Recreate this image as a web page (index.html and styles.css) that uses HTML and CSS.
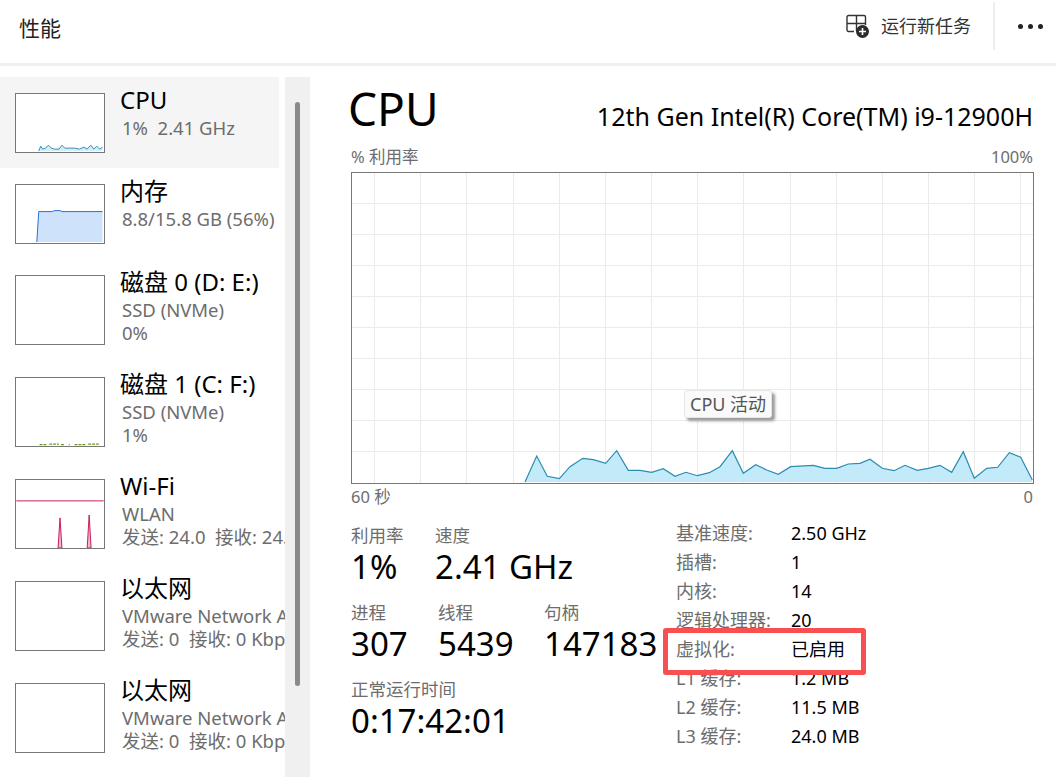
FILE: index.html
```html
<!DOCTYPE html>
<html lang="zh-CN">
<head>
  <meta charset="UTF-8">
  <title>性能</title>
  <link rel="stylesheet" href="styles.css">
</head>
<body>

  <!-- Header -->
  <header class="top-bar">
    <div class="top-title">性能</div>
    <div class="top-actions">
      <svg class="new-task-icon" width="24" height="25" viewBox="0 0 24 25">
        <path d="M8 17.5H2.5a1.5 1.5 0 0 1-1.500-1.500V3a1.500 1.500 0 0 1 1.500-1.500H18a1.500 1.500 0 0 1 1.500 1.500V11M1 9.500H19.500M10.500 1.500V17" fill="none" stroke="#333" stroke-width="1.400"/>
        <circle cx="16.500" cy="17.500" r="6.500" fill="#2b2b2b"/>
        <path d="M16.500 14V21M13 17.500H20" stroke="#fff" stroke-width="1.600"/>
      </svg>
      <span class="new-task-label">运行新任务</span>
      <div class="top-divider"></div>
      <div class="more-dots"><i></i><i></i><i></i></div>
    </div>
  </header>

  <main class="main-area">

    <!-- Side list -->
    <nav class="side-list">
      <div class="side-item short selected">
        <svg class="thumb" width="90" height="60" viewBox="0 0 90 60">
          <path d="M23 59 L25 54 L27 57 L30 56 L33 53 L36 56 L39 57 L44 57 L47 53 L50 56 L55 56 L60 56 L65 57 L70 55 L73 57 L77 53 L80 57 L83 54 L86 57 L89 55 V59 Z" fill="#d3eef9"/>
          <path d="M23 59 L25 54 L27 57 L30 56 L33 53 L36 56 L39 57 L44 57 L47 53 L50 56 L55 56 L60 56 L65 57 L70 55 L73 57 L77 53 L80 57 L83 54 L86 57 L89 55" fill="none" stroke="#2a8db0" stroke-width="1"/>
        </svg>
        <div class="side-text">
          <div class="side-name">CPU</div>
          <div class="side-sub">1%&nbsp; 2.41 GHz</div>
        </div>
      </div>
      <div class="side-item short">
        <svg class="thumb" width="90" height="60" viewBox="0 0 90 60">
          <path d="M21 59 L23 27.500 H37 L39 26.500 H45 L47 27.500 H89 V59 Z" fill="#cfe2fb"/>
          <path d="M21 59 L23 27.500 H37 L39 26.500 H45 L47 27.500 H89" fill="none" stroke="#1f6fd6" stroke-width="1"/>
        </svg>
        <div class="side-text">
          <div class="side-name">内存</div>
          <div class="side-sub">8.8/15.8 GB (56%)</div>
        </div>
      </div>
      <div class="side-item">
        <svg class="thumb" width="90" height="70" viewBox="0 0 90 70"></svg>
        <div class="side-text">
          <div class="side-name">磁盘 0 (D: E:)</div>
          <div class="side-sub">SSD (NVMe)</div>
          <div class="side-sub">0%</div>
        </div>
      </div>
      <div class="side-item">
        <svg class="thumb" width="90" height="70" viewBox="0 0 90 70">
          <path d="M24 68.500H32M34 68H44M46 68.500H50M54 68.500H55M60 68.500H72M74 68H86" fill="none" stroke="#6b9a1f" stroke-width="1.200" stroke-dasharray="3 1"/>
        </svg>
        <div class="side-text">
          <div class="side-name">磁盘 1 (C: F:)</div>
          <div class="side-sub">SSD (NVMe)</div>
          <div class="side-sub">1%</div>
        </div>
      </div>
      <div class="side-item">
        <svg class="thumb" width="90" height="70" viewBox="0 0 90 70">
          <path d="M43 70 L45 39 L47 70 Z M73 70 L75 36 L77 70 Z" fill="#efb8cf" stroke="#c8175a" stroke-width="1"/>
          <path d="M0 21.500H90" stroke="#c8175a" stroke-width="1"/>
        </svg>
        <div class="side-text">
          <div class="side-name">Wi-Fi</div>
          <div class="side-sub">WLAN</div>
          <div class="side-sub">发送: 24.0&nbsp; 接收: 24.</div>
        </div>
      </div>
      <div class="side-item">
        <svg class="thumb" width="90" height="70" viewBox="0 0 90 70"></svg>
        <div class="side-text">
          <div class="side-name">以太网</div>
          <div class="side-sub">VMware Network A</div>
          <div class="side-sub">发送: 0&nbsp; 接收: 0 Kbp</div>
        </div>
      </div>
      <div class="side-item">
        <svg class="thumb" width="90" height="70" viewBox="0 0 90 70"></svg>
        <div class="side-text">
          <div class="side-name">以太网</div>
          <div class="side-sub">VMware Network A</div>
          <div class="side-sub">发送: 0&nbsp; 接收: 0 Kbp</div>
        </div>
      </div>
    </nav>

    <!-- Scrollbar -->
    <div class="scroll-track"><div class="scroll-thumb"></div></div>

    <!-- Detail pane -->
    <section class="detail">
      <div class="detail-head">
        <h1>CPU</h1>
        <div class="model-name">12th Gen Intel(R) Core(TM) i9-12900H</div>
      </div>
      <div class="chart-label top">
        <span>% 利用率</span>
        <span>100%</span>
      </div>

      <div class="chart-box">
        <svg width="683" height="312" viewBox="351 172 683 312">
          <path class="grid-line" d="M374.500 172V483M420.500 172V483M466.500 172V483M513.500 172V483M559.500 172V483M605.500 172V483M651.500 172V483M697.500 172V483M743.500 172V483M790.500 172V483M836.500 172V483M882.500 172V483M928.500 172V483M974.500 172V483M1020.500 172V483"/>
          <path class="grid-line" d="M351 203.500H1033M351 234.500H1033M351 265.500H1033M351 296.500H1033M351 327.500H1033M351 358.500H1033M351 389.500H1033M351 420.500H1033M351 451.500H1033"/>
          <path class="cpu-area" d="M525 482 L536.700 456 L547.300 476.300 L559.300 478.700 L570 466.700 L582.700 458.300 L593.300 459.700 L605.700 463.300 L616.700 450.700 L628.300 470.300 L640 470.300 L651.700 472.300 L663.300 468.700 L675 476.300 L686 472.300 L697.300 475.700 L709.300 472.700 L720 466.700 L732.300 450.700 L743.300 473.300 L755.700 464.700 L766.700 470 L778.300 474.300 L790.700 466.700 L813.300 465.300 L825 468.300 L836.700 468.300 L848.300 464 L860 463.300 L870 459.300 L882.300 468.300 L894 470.700 L905 465.300 L917.300 470.300 L928.300 468.300 L940 465.300 L951.700 472.300 L963.300 451.700 L974.300 478.300 L986.700 468.300 L997.700 467.300 L1009.300 452.700 L1020.700 457.300 L1032.300 480 V482 Z"/>
          <path class="cpu-line" d="M525 482 L536.700 456 L547.300 476.300 L559.300 478.700 L570 466.700 L582.700 458.300 L593.300 459.700 L605.700 463.300 L616.700 450.700 L628.300 470.300 L640 470.300 L651.700 472.300 L663.300 468.700 L675 476.300 L686 472.300 L697.300 475.700 L709.300 472.700 L720 466.700 L732.300 450.700 L743.300 473.300 L755.700 464.700 L766.700 470 L778.300 474.300 L790.700 466.700 L813.300 465.300 L825 468.300 L836.700 468.300 L848.300 464 L860 463.300 L870 459.300 L882.300 468.300 L894 470.700 L905 465.300 L917.300 470.300 L928.300 468.300 L940 465.300 L951.700 472.300 L963.300 451.700 L974.300 478.300 L986.700 468.300 L997.700 467.300 L1009.300 452.700 L1020.700 457.300 L1032.300 480"/>
          <rect class="chart-frame" x="351.500" y="172.500" width="682" height="311"/>
        </svg>
        <div class="chart-tip">CPU 活动</div>
      </div>

      <div class="chart-label bottom">
        <span>60 秒</span>
        <span>0</span>
      </div>

      <div class="stats-area">
        <div class="stats-left">
          <div class="stat-row">
            <div class="stat w-util">
              <div class="stat-name">利用率</div>
              <div class="stat-value">1%</div>
            </div>
            <div class="stat">
              <div class="stat-name">速度</div>
              <div class="stat-value">2.41 GHz</div>
            </div>
          </div>
          <div class="stat-row">
            <div class="stat w-proc">
              <div class="stat-name">进程</div>
              <div class="stat-value">307</div>
            </div>
            <div class="stat w-thread">
              <div class="stat-name">线程</div>
              <div class="stat-value">5439</div>
            </div>
            <div class="stat">
              <div class="stat-name">句柄</div>
              <div class="stat-value">147183</div>
            </div>
          </div>
          <div class="stat-row">
            <div class="stat">
              <div class="stat-name">正常运行时间</div>
              <div class="stat-value">0:17:42:01</div>
            </div>
          </div>
        </div>

        <div class="specs">
          <div class="spec-row"><span class="spec-name">基准速度:</span><span>2.50 GHz</span></div>
          <div class="spec-row"><span class="spec-name">插槽:</span><span>1</span></div>
          <div class="spec-row"><span class="spec-name">内核:</span><span>14</span></div>
          <div class="spec-row"><span class="spec-name">逻辑处理器:</span><span>20</span></div>
          <div class="spec-row marked"><span class="spec-name">虚拟化:</span><span>已启用</span><div class="red-box"></div></div>
          <div class="spec-row"><span class="spec-name">L1 缓存:</span><span>1.2 MB</span></div>
          <div class="spec-row"><span class="spec-name">L2 缓存:</span><span>11.5 MB</span></div>
          <div class="spec-row"><span class="spec-name">L3 缓存:</span><span>24.0 MB</span></div>
        </div>
      </div>
    </section>
  </main>

</body>
</html>
```

FILE: styles.css
```css
* {
  box-sizing: border-box;
}

html, body {
  height: 100%;
}

body {
  margin: 0;
  overflow: hidden;
  display: flex;
  flex-direction: column;
  background-color: #fff;
  color: #000;
  font-family: "Noto Sans", "Noto Sans CJK SC", sans-serif;
}

.top-bar {
  height: 66px;
  flex: none;
  display: flex;
  justify-content: space-between;
  border-bottom: 3px solid #f0f0f0;
}

.top-title {
  padding: 13px 0 0 19px;
  font-size: 21px;
  line-height: 30px;
  color: #222;
}

.top-actions {
  display: flex;
  align-items: flex-start;
}

.new-task-icon {
  margin: 14px 11px 0 0;
}

.new-task-label {
  margin-top: 13px;
  font-size: 18px;
  line-height: 26px;
  color: #333;
}

.top-divider {
  width: 2px;
  height: 48px;
  margin: 2px 23px 0 22px;
  background-color: #eee;
}

.more-dots {
  display: flex;
  gap: 5px;
  margin: 24px 13px 0 0;
}

.more-dots i {
  display: block;
  width: 5px;
  height: 5px;
  border-radius: 50%;
  background-color: #222;
}

.main-area {
  flex: 1;
  display: flex;
  padding-top: 11px;
  min-height: 0;
}

.side-list {
  width: 285px;
  flex: none;
  overflow: hidden;
}

.side-item {
  width: 279px;
  height: 102px;
  display: flex;
  padding: 16px 0 0 15px;
}

.side-item.short {
  height: 91px;
}

.side-item.selected {
  background-color: #f5f5f5;
}

.thumb {
  flex: none;
  background-color: #fff;
  border: 1px solid #777;
}

.side-text {
  margin-left: 15px;
  margin-top: -9px;
  white-space: nowrap;
}

.side-name {
  font-size: 24px;
  line-height: 32px;
}

.side-sub {
  padding-left: 2px;
  font-size: 18.500px;
  line-height: 23px;
  color: #6d6d6d;
}

.scroll-track {
  width: 25px;
  flex: none;
  padding: 25px 0 0 10px;
  background-color: #f0f0f0;
}

.scroll-thumb {
  width: 5px;
  height: 584px;
  border-radius: 3px;
  background-color: #8a8a8a;
}

.detail {
  flex: 1;
  padding: 0 23px 0 41px;
  min-width: 0;
}

.detail-head {
  display: flex;
  justify-content: space-between;
  align-items: baseline;
  height: 68px;
}

h1 {
  margin: -2px 0 0 -3px;
  font-size: 46px;
  font-weight: normal;
  line-height: 66px;
}

.model-name {
  font-size: 25px;
}

.chart-label {
  display: flex;
  justify-content: space-between;
  font-size: 16.500px;
  line-height: 20px;
  color: #6d6d6d;
}

.chart-label.top {
  height: 27px;
  padding-top: 2px;
}

.chart-label.bottom {
  height: 35px;
  padding-top: 3px;
}

.chart-box {
  position: relative;
  height: 312px;
}

.chart-box svg {
  display: block;
}

.grid-line {
  fill: none;
  stroke: #ebebeb;
  stroke-width: 1;
}

.cpu-area {
  fill: #bfe9f9;
  fill-opacity: 0.95;
}

.cpu-line {
  fill: none;
  stroke: #2a8db0;
  stroke-width: 1.200;
}

.chart-frame {
  fill: none;
  stroke: #777;
  stroke-width: 1;
}

.chart-tip {
  position: absolute;
  left: 333px;
  top: 218px;
  height: 28px;
  padding: 0 5px;
  font-size: 18px;
  line-height: 26px;
  white-space: nowrap;
  color: #555;
  background-color: #fafafa;
  border: 1px solid #e6e6e6;
  border-radius: 3px;
  box-shadow: 3px 3px 3px #999;
}

.stats-area {
  display: flex;
}

.stats-left {
  width: 325px;
  flex: none;
  padding-top: 4px;
}

.stat-row {
  display: flex;
  height: 77px;
}

.w-util {
  width: 84px;
}

.w-proc {
  width: 87px;
}

.w-thread {
  width: 106px;
}

.stat-name {
  font-size: 17.500px;
  line-height: 24px;
  color: #6d6d6d;
}

.stat-value {
  font-size: 33px;
  line-height: 40px;
  white-space: nowrap;
}

.specs {
  flex: 1;
  font-size: 18px;
}

.spec-row {
  display: flex;
  height: 29px;
  line-height: 29px;
  white-space: nowrap;
}

.spec-name {
  width: 115px;
  color: #6d6d6d;
}

.spec-row.marked {
  position: relative;
}

.red-box {
  position: absolute;
  left: -13px;
  top: -7px;
  width: 203px;
  height: 47px;
  border: 5px solid #f85050;
  border-radius: 3px;
}
```
